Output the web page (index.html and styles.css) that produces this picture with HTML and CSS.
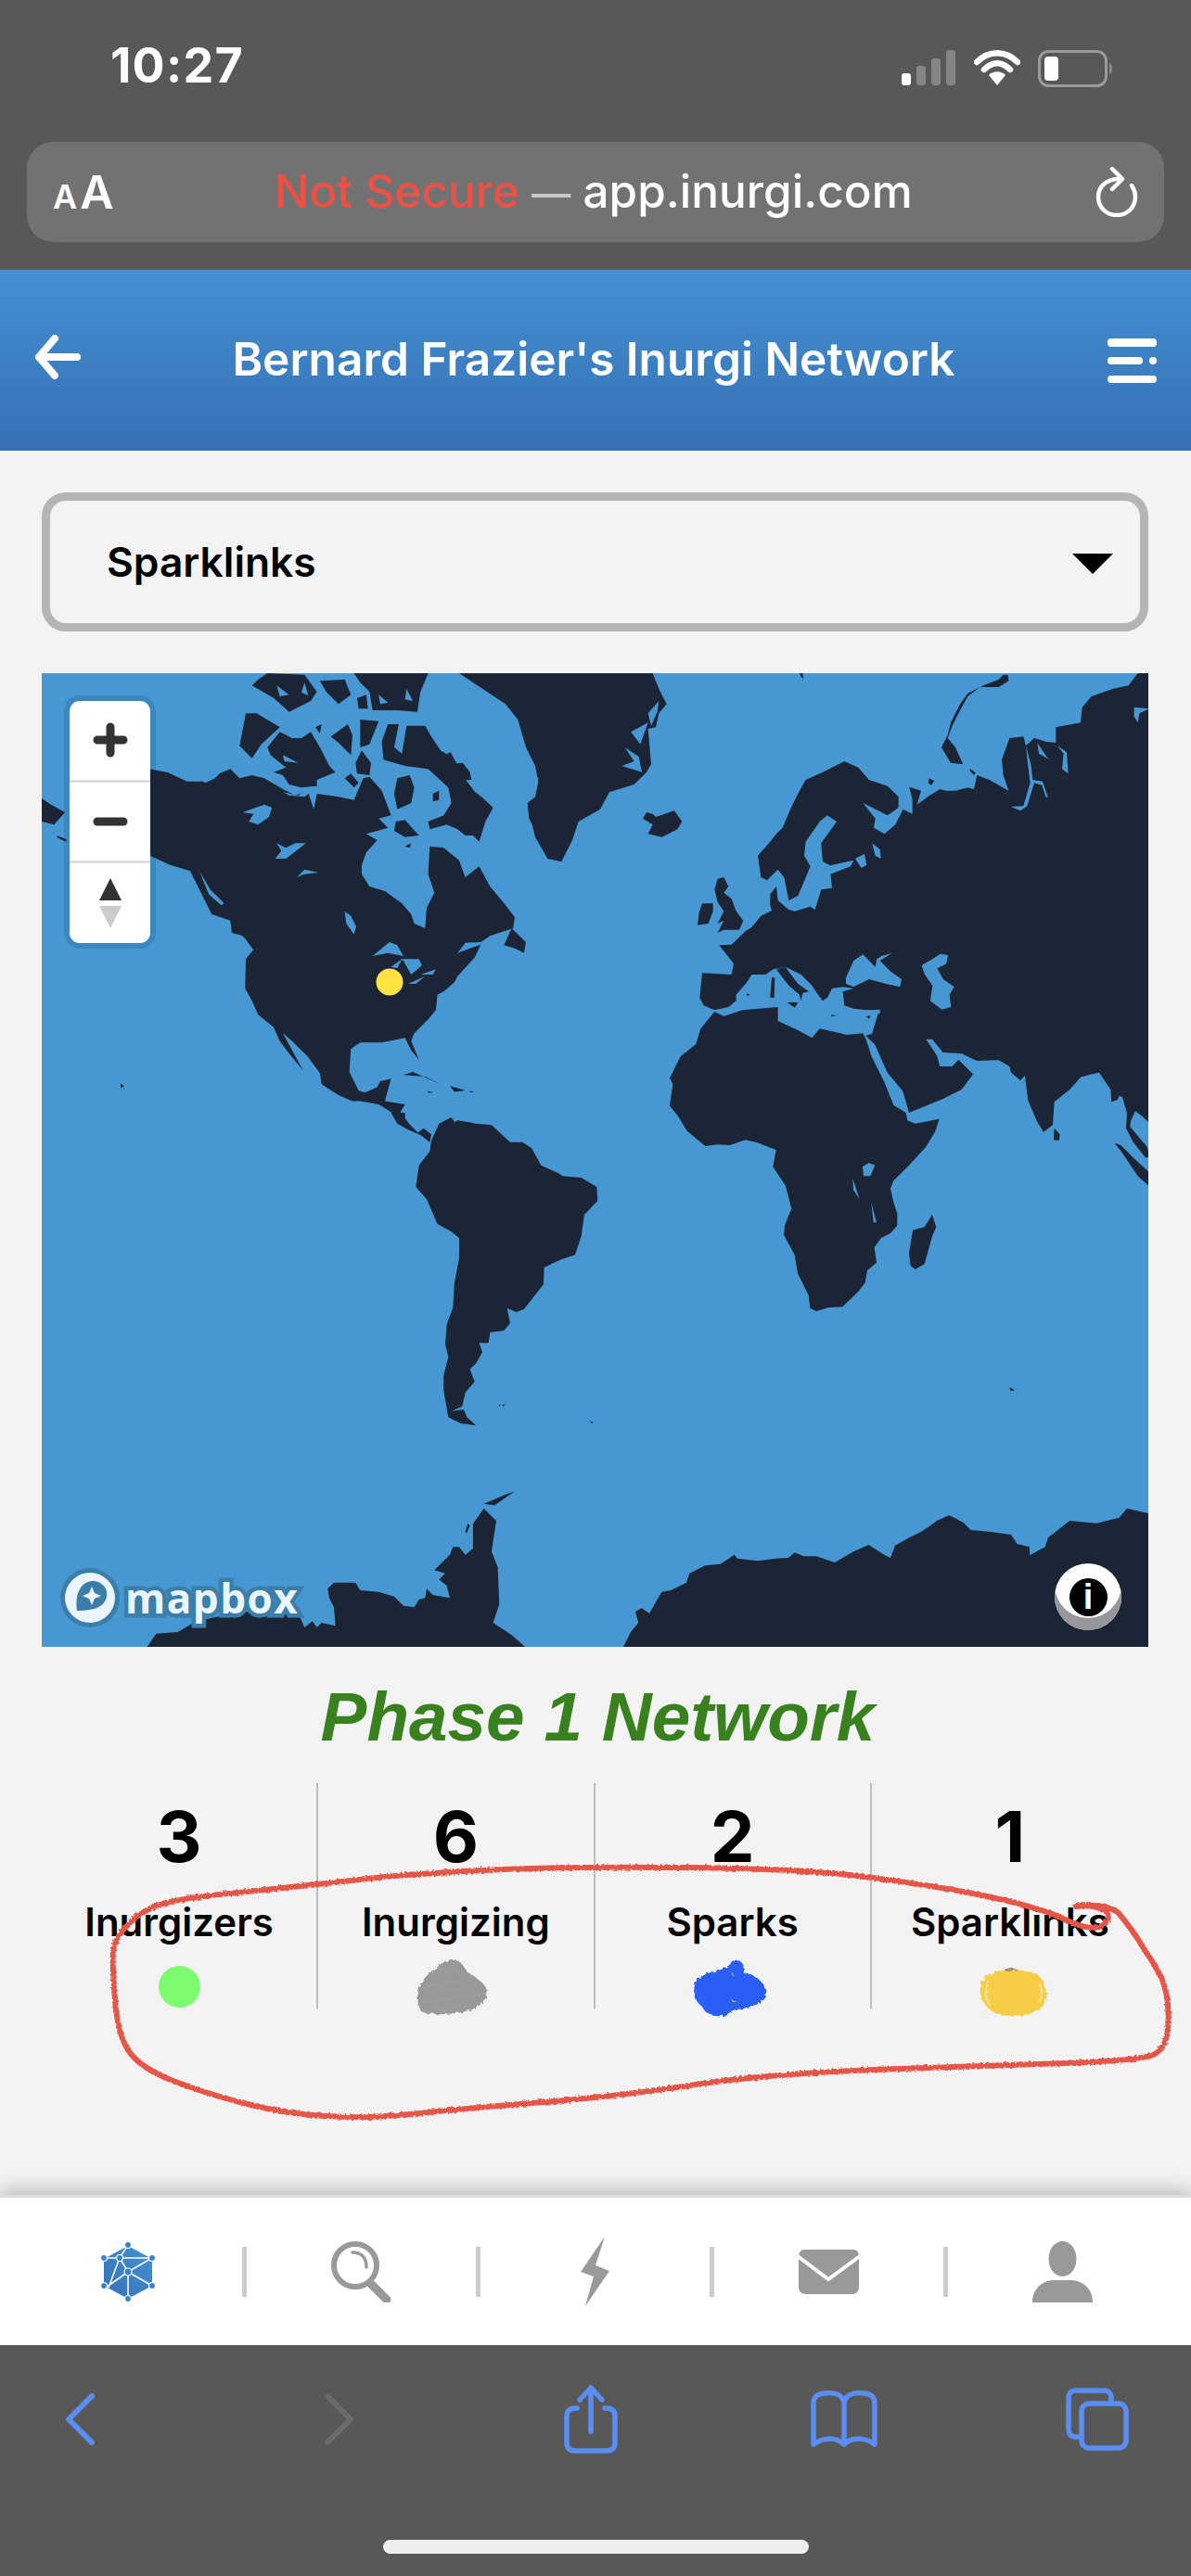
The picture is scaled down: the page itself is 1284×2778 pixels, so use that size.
FILE: index.html
```html
<!DOCTYPE html>
<html lang="en">
<head>
<meta charset="utf-8">
<title>Bernard Frazier's Inurgi Network</title>
<link rel="stylesheet" href="styles.css">
</head>
<body>
<div class="screen">
  <div class="browser-top">
    <div class="statusbar">
      <span class="clock">10:27</span>
      <div class="status-icons">
        <svg class="ic-signal" viewBox="0 0 59 38"><rect class="bar-on" x="0" y="25" width="10" height="13" rx="3"/><rect class="bar-off" x="16" y="17" width="10" height="21" rx="3"/><rect class="bar-off" x="32" y="9" width="10" height="29" rx="3"/><rect class="bar-off" x="48" y="0" width="10" height="38" rx="3"/></svg>
        <svg class="ic-wifi" viewBox="0 0 50 38"><path class="wifi-arc" d="M3 13C16 0 34 0 47 13"/><path class="wifi-arc" d="M11 21C20 12 30 12 39 21"/><path class="wifi-dot" d="M25 38L16 27C21 22 29 22 34 27Z"/></svg>
        <svg class="ic-batt" viewBox="0 0 82 40"><rect class="batt-body" x="1.5" y="1.5" width="72" height="37" rx="10"/><rect class="batt-fill" x="7" y="7" width="15" height="26" rx="4"/><path class="batt-nub" d="M77 14C81 15 81 25 77 26Z"/></svg>
      </div>
    </div>
    <div class="urlbar">
      <span class="aa"><small>A</small>A</span>
      <span class="url"><span class="insecure">Not Secure</span> <span class="dash">—</span> app.inurgi.com</span>
      <svg class="ic-reload" viewBox="0 0 46 54"><path d="M27 13C13 12 3 21 3 32C3 44 12 52 23 52C34 52 43 44 43 32C43 27 41 23 39 20"/><path d="M18 2L29 13L18 24"/></svg>
    </div>
  </div>

  <header class="appbar">
    <svg class="ic-back" viewBox="0 0 50 48"><path d="M22 4L5 24L22 44M5 24H46"/></svg>
    <h1 class="apptitle">Bernard Frazier's Inurgi Network</h1>
    <svg class="ic-menu" viewBox="0 0 53 48"><rect x="0" y="0" width="53" height="9" rx="4"/><rect x="0" y="20" width="38" height="8" rx="4"/><rect x="45" y="20" width="8" height="8" rx="4"/><rect x="0" y="40" width="53" height="8" rx="4"/></svg>
  </header>

  <main class="content">
    <div class="select">
      <span>Sparklinks</span>
      <i class="caret"></i>
    </div>

    <div class="map">
      <svg class="world" viewBox="45 726 1193 1050">
        <g class="land" transform="translate(45 726) scale(.3333)">
          <!-- North America -->
          <polygon points="350,310 410,322 470,350 515,350 560,330 610,310 640,340 680,330 720,340 780,375 820,395 860,380 880,440 890,390 960,400 1010,410 1040,340 1060,335 1100,380 1130,460 1090,470 1120,500 1050,520 1085,540 1050,580 1035,620 1035,650 1060,690 1110,705 1165,745 1195,780 1205,810 1240,825 1245,760 1270,710 1250,650 1255,560 1300,565 1350,605 1370,660 1415,625 1450,690 1500,750 1530,790 1525,825 1450,850 1420,870 1370,872 1345,905 1420,878 1400,920 1345,980 1335,1000 1300,1030 1280,1040 1275,1090 1250,1120 1205,1165 1195,1190 1220,1250 1195,1220 1175,1180 1100,1195 1030,1195 1000,1215 995,1290 1025,1350 1045,1357 1085,1340 1095,1320 1130,1312 1110,1385 1175,1395 1160,1420 1190,1460 1220,1490 1200,1480 1170,1455 1130,1420 1090,1395 1030,1385 1005,1385 960,1365 905,1330 900,1295 860,1240 810,1190 780,1165 845,1285 800,1230 770,1190 750,1145 700,1105 680,1060 658,1020 660,925 680,900 660,860 615,840 610,800 550,780 480,640 415,620 350,590 300,450"/>
          <!-- Aleutians -->
          <polygon points="0,405 30,425 75,450 40,490 0,480"/>
          <polygon points="50,525 80,538 78,545 50,532"/>
          <!-- Arctic islands -->
          <polygon points="1105,280 1100,220 1120,165 1155,165 1140,240 1165,260 1180,170 1240,170 1260,205 1290,250 1310,262 1322,255 1342,292 1362,290 1385,320 1390,345 1372,346 1402,385 1422,400 1460,435 1435,480 1415,545 1395,525 1370,525 1345,505 1310,490 1255,505 1250,480 1300,460 1325,420 1315,370 1250,310 1175,300"/>
          <polygon points="1145,480 1175,475 1220,525 1175,530 1140,510"/>
          <polygon points="1265,390 1285,380 1285,410 1265,415"/>
          <polygon points="1175,560 1195,550 1190,565"/>
          <polygon points="1150,340 1190,330 1205,370 1195,420 1150,440 1140,390"/>
          <polygon points="980,340 1000,325 1025,355 1010,370"/>
          <polygon points="730,240 770,190 810,210 840,210 870,190 900,240 930,300 950,320 890,345 890,365 840,370 800,360 780,330 750,320 790,305 740,265"/>
          <polygon points="660,130 695,130 770,175 710,230 680,275 640,235"/>
          <polygon points="885,175 905,165 900,195"/>
          <polygon points="935,205 990,165 1005,200 1000,265 960,225"/>
          <polygon points="1030,150 1090,155 1060,230 1030,240"/>
          <polygon points="1015,290 1035,250 1065,290 1060,330 1020,325"/>
          <polygon points="700,20 730,0 850,5 890,60 870,90 800,125 750,80 680,40"/>
          <polygon points="900,25 980,20 1000,70 960,100 920,60"/>
          <polygon points="1020,80 1050,70 1055,115 1025,115"/>
          <polygon points="1010,0 1250,0 1225,60 1215,125 1150,120 1070,120 1060,60 1030,30"/>
          <polygon points="1495,880 1520,825 1566,870 1560,905 1530,890"/>
          <polygon points="1400,965 1460,935 1430,950"/>
          <!-- Caribbean -->
          <polygon points="1170,1300 1200,1290 1290,1330 1240,1305"/>
          <polygon points="1320,1335 1370,1350 1335,1355"/>
          <polygon points="1250,1352 1265,1356 1250,1358"/>
          <polygon points="1385,1352 1400,1354 1385,1356"/>
          <polygon points="255,1328 266,1336 256,1342"/>
        </g>
        <g class="land" transform="translate(567 726) scale(.3333)">
          <!-- Greenland -->
          <polygon points="-216,0 410,0 430,50 455,100 430,130 420,175 395,180 405,295 390,320 350,360 270,385 240,440 170,480 150,540 115,610 70,600 30,530 20,490 10,470 5,420 30,400 40,350 30,300 0,240 -26,150 -66,100"/>
          <polygon points="885,0 895,0 898,18 890,12"/>
          <!-- Europe -->
          <polygon points="570,970 665,975 672,940 625,880 665,878 710,835 730,822 760,785 795,768 790,750 790,715 810,690 815,735 850,765 870,770 920,755 935,765 955,700 990,695 985,650 1050,625 1060,605 985,622 960,610 955,550 1005,480 975,460 950,480 905,545 900,590 920,625 895,685 880,720 850,735 835,660 815,635 780,670 760,660 750,590 790,545 810,520 830,500 860,430 885,380 905,345 960,320 1030,285 1075,305 1110,345 1170,365 1205,400 1205,435 1170,460 1090,420 1130,470 1125,500 1160,520 1195,490 1220,440 1250,455 1250,410 1240,368 1278,380 1265,425 1300,400 1330,385 1340,1122 1145,1122 1145,1088 1100,1090 1060,1085 1030,1075 1025,1030 1060,1020 1025,1015 990,1020 975,1050 960,1060 945,1040 925,1010 890,975 840,950 800,958 775,975 730,975 715,1000 680,1040 680,1060 655,1080 610,1090 575,1075 562,1050"/>
          <polygon points="810,958 830,985 850,1010 885,1040 890,1060 895,1035 915,1030 880,1005 850,965 840,950"/>
          <polygon points="795,985 805,985 803,1050 790,1050"/>
          <polygon points="845,1065 880,1065 870,1082"/>
          <polygon points="985,1105 1005,1108 990,1110"/>
          <polygon points="1100,1110 1115,1108 1110,1118"/>
          <polygon points="715,1035 725,1040 715,1045"/>
          <polygon points="570,745 605,745 605,770 590,810 555,815 560,775"/>
          <polygon points="620,665 640,660 655,690 640,710 665,730 680,770 703,800 690,830 640,830 620,840 640,800 620,810 640,770 620,740 610,700"/>
          <polygon points="390,450 410,455 420,465 480,445 505,480 490,505 440,530 395,520 410,490 378,470"/>
        </g>
        <g class="land" transform="translate(1000 726) scale(.3333)">
          <!-- Northern Asia -->
          <polygon points="0,400 40,375 60,380 90,380 130,370 150,375 160,330 200,345 262,380 245,330 240,280 265,210 310,205 318,235 345,210 385,222 415,225 415,175 495,160 500,110 530,75 600,50 650,40 680,0 720,0 720,1130 0,1130"/>
          <!-- Novaya Zemlya -->
          <polygon points="260,5 262,25 230,45 170,45 130,75 100,130 80,170 65,210 90,240 115,295 75,290 45,240 65,200 75,160 105,100 130,65 180,40 230,20 245,5"/>
          <polygon points="137,308 155,322 150,330 137,316"/>
          <polygon points="5,340 22,348 12,362 2,355"/>
        </g>
        <g class="land" transform="translate(760 1100) scale(.3333)">
          <!-- South Asia and Arabia -->
          <polygon points="560,-20 1440,-20 1440,335 1415,312 1392,295 1378,325 1375,345 1430,410 1440,445 1425,445 1385,395 1362,350 1365,300 1350,250 1340,245 1335,258 1315,265 1312,225 1275,170 1240,178 1215,185 1180,225 1130,265 1125,340 1095,362 1075,330 1045,260 1035,180 1020,195 990,170 985,150 950,130 875,132 830,108 818,125 868,175 830,225 770,255 660,300 640,230 590,170 550,80 520,50 540,45"/>
          <!-- Africa -->
          <polygon points="31,-27 61,-12 121,-32 236,-42 236,3 301,33 346,58 371,28 461,48 511,43 520,60 540,120 580,200 610,275 650,300 655,325 680,335 758,320 745,360 715,410 660,470 610,520 600,545 610,590 622,625 622,665 600,690 570,705 548,735 555,785 525,810 518,850 495,880 445,928 400,930 360,942 340,932 335,890 300,820 290,760 255,695 258,665 280,610 260,535 220,475 230,420 165,395 130,388 80,405 40,403 1,408 -59,358 -89,308 -114,278 -104,208 -114,188 -79,118 -29,78 -14,28"/>
          <polygon points="735,630 748,670 735,700 710,790 680,806 665,795 660,755 672,680 710,670"/>
          <polygon points="1130,350 1148,370 1145,390 1128,388"/>
          <polygon points="1325,398 1345,405 1390,450 1440,495 1440,540 1400,505 1350,430"/>
          <polygon points="985,1188 1003,1198 988,1200"/>
        </g>
        <g class="land" transform="translate(300 1200) scale(.3333)">
          <!-- South America -->
          <polygon points="495,90 520,35 560,15 570,30 580,25 640,35 690,40 750,95 790,95 820,115 850,170 905,195 920,205 980,210 1030,240 1033,285 990,330 980,400 960,460 915,475 860,500 858,555 795,635 770,645 740,632 750,680 730,705 685,710 680,745 650,745 660,775 640,810 620,830 635,870 605,905 595,950 560,965 600,960 610,985 640,1012 590,1005 550,985 535,900 535,850 550,790 540,750 545,685 565,630 570,550 585,470 585,405 560,385 515,360 480,280 445,240 455,170 490,125"/>
          <polygon points="365,0 410,0 410,30 450,65 470,50 495,70 490,95 460,72 420,55 385,35"/>
          <polygon points="712,948 720,942 716,950"/>
          <polygon points="726,945 735,942 728,952"/>
          <polygon points="1005,995 1018,1002 1016,1006"/>
        </g>
        <g class="land" transform="translate(45 1590) scale(.3333)">
          <!-- Antarctic peninsula -->
          <polygon points="340,560 370,515 440,510 500,475 620,450 700,440 830,450 850,495 875,475 890,495 905,480 950,490 945,430 930,400 925,370 945,350 1015,350 1030,375 1090,380 1140,395 1170,425 1205,430 1220,405 1240,400 1245,370 1265,390 1320,400 1310,360 1285,340 1305,320 1270,310 1320,260 1330,235 1350,235 1370,260 1395,240 1395,160 1430,110 1470,150 1455,250 1475,300 1480,420 1460,480 1520,520 1566,560"/>
          <polygon points="1430,95 1500,65 1530,55 1465,100"/>
          <polygon points="1370,185 1378,160 1385,165 1375,190"/>
        </g>
        <g class="land" transform="translate(660 1590) scale(.3333)">
          <!-- Antarctica -->
          <polygon points="35,560 60,510 85,480 75,445 95,432 120,450 160,380 190,375 240,350 250,320 300,295 350,290 395,260 405,272 470,280 530,272 570,270 590,253 620,265 660,265 720,285 780,250 830,228 880,260 900,270 915,230 960,205 1000,185 1030,165 1050,150 1090,132 1135,155 1160,180 1220,185 1290,195 1310,225 1350,235 1350,262 1400,235 1410,205 1480,150 1566,158 1640,140 1665,110 1734,126 1734,560"/>
        </g>
        <g class="water" transform="translate(45 726) scale(.3333)">
          <polygon points="650,450 720,425 745,435 735,465 700,490 670,480 685,455"/>
          <polygon points="760,550 790,565 820,550 855,550 790,600 755,600 775,575"/>
          <polygon points="825,660 850,635 895,645 850,650"/>
          <polygon points="980,770 1000,785 1017,820 1010,845 985,810"/>
          <polygon points="1070,915 1125,870 1150,880 1170,915 1120,905"/>
          <polygon points="1130,950 1165,925 1150,955"/>
          <polygon points="1160,925 1220,925 1230,945 1195,975 1170,930"/>
          <polygon points="1185,1005 1240,980 1210,1005"/>
          <polygon points="1225,975 1275,958 1265,975"/>
          <polygon points="510,640 545,700 590,745 580,750 540,715"/>
          <polygon points="615,840 650,850 685,895 675,905 645,860"/>
          <polygon points="510,345 585,315 560,340 530,355"/>
          <polygon points="780,385 830,395 870,365 890,370 850,400 800,395"/>
          <polygon points="760,40 800,70 770,75"/>
          <polygon points="850,30 862,72 840,62"/>
          <polygon points="1090,70 1120,95 1095,100"/>
          <polygon points="1180,50 1200,90 1175,85"/>
          <polygon points="780,265 830,290 785,285"/>
        </g>
        <g class="water" transform="translate(567 726) scale(.3333)">
          <polygon points="1035,985 1060,930 1090,910 1110,930 1130,950 1135,925 1150,915 1185,905 1145,930 1180,965 1215,990 1210,1015 1165,1005 1110,990 1060,1015 1035,1005"/>
          <polygon points="1280,945 1315,925 1340,908 1365,912 1360,940 1330,955 1350,990 1385,1015 1370,1040 1375,1080 1345,1088 1308,1060 1315,1010 1290,975"/>
          <polygon points="1065,600 1095,585 1102,620 1085,630"/>
          <polygon points="1120,550 1145,570 1148,600 1130,590"/>
          <polygon points="320,240 365,270 375,320 310,300 350,285"/>
          <polygon points="340,190 395,160 370,230"/>
          <polygon points="395,130 430,90 425,125 405,170"/>
          <polygon points="0,300 40,340 30,370 0,345"/>
        </g>
        <g class="water" transform="translate(1000 726) scale(.3333)">
          <polygon points="318,235 325,300 332,355 310,430 270,432 300,445 322,430 345,355 370,362 382,400 390,402 372,350 340,345 335,300"/>
          <polygon points="355,225 385,270 395,280 360,260"/>
          <polygon points="420,235 450,255 455,325 435,310 440,260"/>
          <polygon points="668,110 717,115 685,130 680,160 668,140"/>
        </g>
        <g class="water" transform="translate(760 1100) scale(.3333)">
          <polygon points="715,62 735,62 770,105 825,108 880,132 868,175 820,128 800,150 760,150 750,115"/>
          <polygon points="510,475 530,462 550,470 535,505 513,505"/>
          <polygon points="478,512 500,580 480,550"/>
          <polygon points="538,590 555,655 545,655"/>
        </g>
        <circle class="marker" cx="420" cy="1059" r="14.5"/>
      </svg>

      <div class="zoomctl">
        <div class="zbtn">
          <svg class="ic-z" viewBox="0 0 38 38"><path d="M5 19H33M19 5V33"/></svg>
        </div>
        <div class="zbtn">
          <svg class="ic-z" viewBox="0 0 38 38"><path d="M5 19H33"/></svg>
        </div>
        <div class="zbtn zlast">
          <svg class="ic-compass" viewBox="0 0 24 54"><polygon class="north" points="12,0 24,24 0,24"/><polygon class="south" points="0,30 24,30 12,54"/></svg>
        </div>
      </div>

      <div class="mapbox">
        <svg class="ic-mapbox" viewBox="0 0 64 64"><circle class="mb-halo" cx="32" cy="32" r="32"/><circle class="mb-white" cx="32" cy="32" r="27"/><path class="mb-drop" d="M18 46C16 30 20 16 34 14C44 13 52 22 50 31C48 41 38 46 18 46Z"/><path class="mb-star" d="M34 20L37 27L44 30L37 33L34 40L31 33L24 30L31 27Z"/></svg>
        <span class="mb-word">mapbox</span>
      </div>

      <div class="info"><span class="info-i">i</span></div>
    </div>

    <h2 class="phase">Phase 1 Network</h2>

    <div class="stats">
      <div class="stat">
        <span class="num">3</span>
        <span class="lbl">Inurgizers</span>
        <i class="dot"></i>
      </div>
      <div class="stat">
        <span class="num">6</span>
        <span class="lbl">Inurgizing</span>
        <svg class="blob" viewBox="0 0 90 62"><g class="rough"><path class="blob-grey" d="M40 0C50 -1 54 8 58 14C72 22 80 30 79 36C78 48 66 54 52 57C36 60 14 60 8 56C1 44 4 26 18 14C26 8 32 2 40 0Z"/><path class="blob-grey-s" d="M30 10L50 5M14 28L66 20M6 46L76 38M12 56L58 54"/></g></svg>
      </div>
      <div class="stat">
        <span class="num">2</span>
        <span class="lbl">Sparks</span>
        <svg class="blob" viewBox="0 0 90 62"><g class="rough"><path class="blob-blue" d="M44 3C52 0 56 8 55 14C68 16 80 24 81 36C82 46 66 52 48 54C36 60 18 62 14 52C2 46 0 30 8 20C18 12 36 14 44 3Z"/><path class="blob-blue-s" d="M14 50C18 62 38 62 44 52M44 5C50 -1 58 6 54 16"/><path class="blob-fleck" d="M44 14L46 18M44 44L48 46"/></g></svg>
      </div>
      <div class="stat">
        <span class="num">1</span>
        <span class="lbl">Sparklinks</span>
        <svg class="blob" viewBox="0 0 90 62"><path class="blob-cap" d="M36 16C38 8 52 6 56 16Z"/><g class="rough"><path class="blob-yellow" d="M22 16C36 10 60 10 74 16C86 26 88 44 78 52C66 62 40 64 26 56C10 46 8 26 22 16Z"/><path class="blob-gloss" d="M22 24C17 32 18 44 24 50M76 26C80 32 80 40 76 46"/></g></svg>
      </div>
    </div>
  </main>

  <nav class="tabnav">
    <div class="navitem">
      <svg class="ic-net" viewBox="0 0 60 66">
        <defs><linearGradient id="netg" x1="0" y1="1" x2="1" y2="0"><stop offset="0" stop-color="#3571b4"/><stop offset="1" stop-color="#4393d5"/></linearGradient></defs>
        <polygon class="net-fill" points="30,4 56,18 56,48 30,62 4,48 4,18"/>
        <path class="net-lines" d="M30 4L21 18M21 18H56M21 18L30 33M21 18L9 50M30 33L56 18M30 33L56 48M30 33V62M30 33L6 50M4 18L21 18M4 18L30 4M56 18L30 4"/>
        <circle class="net-node" cx="30" cy="4" r="3.5"/><circle class="net-node" cx="4" cy="18" r="3.5"/><circle class="net-node" cx="21" cy="18" r="3.5"/><circle class="net-node" cx="56" cy="18" r="3.5"/><circle class="net-node" cx="30" cy="33" r="4"/><circle class="net-node" cx="4" cy="48" r="3.5"/><circle class="net-node" cx="56" cy="48" r="3.5"/><circle class="net-node" cx="30" cy="62" r="3.5"/>
      </svg>
    </div>
    <div class="navitem">
      <svg class="ic-search" viewBox="0 0 65 66"><circle class="s-ring" cx="26" cy="26" r="23"/><path class="s-glint" d="M23 12C33 12 38 18 38 28"/><path class="s-handle" d="M43 46L60 63"/></svg>
    </div>
    <div class="navitem">
      <svg class="ic-bolt" viewBox="0 0 32 75"><polygon points="26,0 0,38 14,43 5,75 31,37 16,31"/></svg>
    </div>
    <div class="navitem">
      <svg class="ic-mail" viewBox="0 0 65 48"><path class="mail-body" d="M6 0H59C63 0 65 3 65 8V40C65 45 62 48 58 48H8C3 48 0 45 0 40V8C0 3 2 0 6 0Z"/><path class="mail-v" d="M-1 7L32 32L66 7"/></svg>
    </div>
    <div class="navitem">
      <svg class="ic-user" viewBox="0 0 65 66"><ellipse cx="32.5" cy="19" rx="15" ry="19"/><path d="M0 66C0 50 12 42 24 42H41C53 42 65 50 65 66Z"/></svg>
    </div>
  </nav>

  <footer class="toolbar">
    <div class="tool-icons">
      <svg class="ic-chev" viewBox="0 0 32 56"><path class="tb" d="M29 3L4 28L29 53"/></svg>
      <svg class="ic-chev ic-fwd" viewBox="0 0 32 56"><path class="tb tb-off" d="M3 3L28 28L3 53"/></svg>
      <svg class="ic-share" viewBox="0 0 58 74"><path class="tb" d="M14 25H12C6 25 3 28 3 34V62C3 68 6 71 12 71H46C52 71 55 68 55 62V34C55 28 52 25 46 25H44"/><path class="tb" d="M29 50V3M17 16L29 3L41 16"/></svg>
      <svg class="ic-book" viewBox="0 0 72 62"><path class="tb" d="M36 12C33 2 22 2 14 3C6 4 3 7 3 14V58C14 50 28 50 36 58C44 50 58 50 69 58V14C69 7 66 4 58 3C50 2 39 2 36 12V56"/></svg>
      <svg class="ic-tabs" viewBox="0 0 68 68"><path class="tb" d="M15 53H11C6 53 3 50 3 45V11C3 6 6 3 11 3H41C46 3 49 6 49 11V17"/><rect class="tb" x="17" y="17" width="48" height="48" rx="8"/></svg>
    </div>
    <i class="homebar"></i>
  </footer>

  <svg class="redline" viewBox="0 0 1284 2778">
    <defs>
      <filter id="rough" filterUnits="userSpaceOnUse" x="0" y="1900" width="1284" height="500">
        <feTurbulence type="fractalNoise" baseFrequency=".35" numOctaves="2" seed="4"/>
        <feDisplacementMap in="SourceGraphic" scale="4"/>
      </filter>
      <filter id="roughblob" x="-15%" y="-15%" width="130%" height="130%">
        <feTurbulence type="fractalNoise" baseFrequency=".25" numOctaves="2" seed="7"/>
        <feDisplacementMap in="SourceGraphic" scale="5"/>
      </filter>
    </defs>
    <path d="M134 2080Q145 2066 166 2056Q188 2047 266 2040Q344 2032 387 2027Q430 2022 469 2020Q508 2017 573 2015Q639 2013 745 2014Q852 2015 917 2022Q983 2030 1044 2041Q1106 2053 1140 2066Q1170 2082 1185 2078Q1200 2072 1192 2060Q1170 2052 1160 2056Q1190 2052 1205 2062Q1222 2082 1236 2106Q1253 2130 1257 2148Q1261 2167 1259 2188Q1257 2210 1243 2216Q1229 2222 1147 2225Q1065 2228 942 2232Q819 2237 737 2250Q655 2262 573 2268Q491 2275 442 2280Q393 2285 352 2282Q311 2280 270 2270Q229 2260 192 2246Q156 2233 141 2215Q127 2197 124 2157Q121 2117 122 2105Q123 2093 134 2080"/>
  </svg>
</div>
</body>
</html>
```

FILE: styles.css
```css
* { box-sizing: border-box; }
html, body { margin: 0; padding: 0; }
body { width: 1284px; height: 2778px; overflow: hidden; background: #585858; font-family: Inter, "Liberation Sans", sans-serif; }
svg { display: block; }
.screen { position: relative; width: 1284px; height: 2778px; display: flex; flex-direction: column; }

/* Safari top chrome */
.browser-top { height: 291px; background: #585858; padding: 0 29px; display: flex; flex-direction: column; flex: none; }
.statusbar { height: 153px; display: flex; justify-content: space-between; align-items: flex-start; padding: 42px 0 0 90px; }
.clock { color: #fff; font-size: 52px; font-weight: 700; line-height: 58px; letter-spacing: 1.2px; }
.status-icons { display: flex; align-items: flex-start; gap: 19px; padding: 12px 54px 0 0; }
.ic-signal { width: 59px; height: 38px; }
.bar-on { fill: #fff; }
.bar-off { fill: #858585; }
.ic-wifi { width: 50px; height: 38px; }
.wifi-arc { fill: none; stroke: #fff; stroke-width: 6.5; stroke-linecap: round; }
.wifi-dot { fill: #fff; }
.ic-batt { width: 82px; height: 40px; }
.batt-body { fill: none; stroke: #9a9a9a; stroke-width: 3; }
.batt-fill { fill: #fff; }
.batt-nub { fill: #8a8a8a; }
.urlbar { height: 108px; background: #727272; border-radius: 28px; display: flex; align-items: center; padding: 0 28px; }
.aa { color: #fff; font-size: 50px; font-weight: 600; width: 239px; flex: none; line-height: 1; }
.aa small { font-size: 36px; margin-right: 3px; }
.url { color: #fff; font-size: 49.5px; font-weight: 500; line-height: 1; white-space: nowrap; flex: 1; }
.insecure { color: #ec5145; }
.dash { color: #c9c9c9; font-size: 42px; }
.ic-reload { width: 46px; height: 54px; flex: none; }
.ic-reload path { fill: none; stroke: #fff; stroke-width: 4.5; stroke-linecap: round; stroke-linejoin: round; }

/* App header */
.appbar { height: 195px; flex: none; background: linear-gradient(180deg, #4391d4 0%, #3570b3 100%); display: flex; align-items: center; justify-content: space-between; padding: 0 37px; }
.ic-back { width: 50px; height: 48px; margin-top: -7px; }
.ic-back path { fill: none; stroke: #fff; stroke-width: 8; stroke-linecap: round; stroke-linejoin: round; }
.apptitle { margin: -3px 0 0 -1px; color: #fff; font-size: 49.6px; font-weight: 600; line-height: 60px; white-space: nowrap; }
.ic-menu { width: 53px; height: 48px; fill: #fff; }

/* Page body */
.content { flex: 1; background: #f3f3f3; padding: 45px 46px 0 45px; display: flex; flex-direction: column; }
.select { height: 150px; flex: none; border: 9px solid #b5b5b5; border-radius: 26px; display: flex; align-items: center; justify-content: space-between; padding: 0 29px 0 61px; font-size: 44.3px; font-weight: 600; color: #000; }
.caret { width: 0; height: 0; border-left: 22px solid transparent; border-right: 22px solid transparent; border-top: 22px solid #000; margin-top: 4px; }

.map { position: relative; height: 1050px; flex: none; margin-top: 45px; background: #4797d2; overflow: hidden; }
.world { width: 1193px; height: 1050px; }
.land { fill: #1c2535; }
.water { fill: #4797d2; }
.marker { fill: #ffe342; }

.zoomctl { position: absolute; left: 24px; top: 24px; width: 99px; border: 6px solid rgba(0, 40, 80, .14); border-radius: 17px; background-clip: padding-box; overflow: hidden; }
.zbtn { height: 87.5px; background: #fff; border-bottom: 3px solid #ddd; display: flex; align-items: center; justify-content: center; }
.zlast { border-bottom: 0; height: 86px; }
.ic-z { width: 38px; height: 38px; }
.ic-z path { stroke: #333; stroke-width: 9; stroke-linecap: round; fill: none; }
.ic-compass { width: 24px; height: 54px; }
.north { fill: #333; }
.south { fill: #ccc; }

.mapbox { position: absolute; left: 20px; top: 965px; display: flex; align-items: center; gap: 6px; }
.ic-mapbox { width: 64px; height: 64px; }
.mb-halo { fill: #3b7ea9; }
.mb-white { fill: #eaf5fd; }
.mb-drop { fill: #3b7ea9; }
.mb-star { fill: #eaf5fd; }
.mb-word { font-family: "Open Sans", sans-serif; font-size: 44px; font-weight: 700; line-height: 56px; color: #eaf5fd; -webkit-text-stroke: 9px #3b7ea9; paint-order: stroke fill; letter-spacing: 1.5px; }

.info { position: absolute; left: 1092px; top: 960px; width: 72px; height: 72px; border-radius: 50%; background: #fff; box-shadow: inset 0 -13px 0 #95979d; display: flex; align-items: flex-start; justify-content: center; padding-top: 16px; }
.info-i { width: 41px; height: 41px; border-radius: 50%; background: #000; color: #fff; font-family: "Liberation Sans", sans-serif; font-weight: 700; font-size: 38px; line-height: 41px; text-align: center; }

.phase { margin: 29px 0 0; height: 100px; text-align: center; color: #39801f; font-family: "Liberation Sans", sans-serif; font-style: italic; font-weight: 700; font-size: 74.7px; line-height: 92px; padding-left: 6px; }
.stats { display: flex; margin-top: 18px; height: 243px; }
.stat { width: 299px; border-right: 2px solid #bdbdbd; display: flex; flex-direction: column; align-items: center; color: #000; }
.stat:last-child { border-right: 0; }
.num { font-size: 76px; font-weight: 700; line-height: 80px; margin-top: 17px; }
.lbl { font-size: 42px; font-weight: 600; line-height: 50px; margin-top: 28px; }
.dot { display: block; width: 45px; height: 45px; border-radius: 50%; background: #7cfc6e; margin-top: 22px; }
.blob { width: 90px; height: 62px; margin-top: 15px; overflow: visible; }
.rough { filter: url(#roughblob); }
.blob-grey { fill: #999; }
.blob-grey-s { stroke: #9d9d9d; stroke-width: 2; fill: none; }
.blob-blue { fill: #2a5ff5; }
.blob-blue-s { stroke: #2a5ff5; stroke-width: 4; fill: none; }
.blob-fleck { stroke: #b9b47a; stroke-width: 1.5; fill: none; }
.blob-cap { fill: #777; }
.blob-yellow { fill: #f7cd45; }
.blob-gloss { stroke: #fbe59a; stroke-width: 2; fill: none; }

/* Bottom nav */
.tabnav { height: 162px; flex: none; background: #fff; border-top: 3px solid #ddd; box-shadow: 0 -6px 18px rgba(0, 0, 0, .22); display: grid; grid-template-columns: repeat(5, 252px); align-items: center; padding-left: 14px; position: relative; }
.navitem { height: 54px; border-right: 5px solid #ccc; display: flex; align-items: center; justify-content: center; }
.navitem:last-child { border-right: 0; padding-right: 5px; }
.navitem svg { flex: none; }
.ic-net { width: 60px; height: 66px; }
.net-fill { fill: url(#netg); }
.net-lines { stroke: #fff; stroke-width: 1.6; fill: none; }
.net-node { fill: #3a83c8; stroke: #fff; stroke-width: 1.2; }
.ic-search { width: 65px; height: 66px; }
.s-ring { fill: none; stroke: #999; stroke-width: 6; }
.s-glint { fill: none; stroke: #999; stroke-width: 3.5; stroke-linecap: round; }
.s-handle { fill: none; stroke: #999; stroke-width: 9; stroke-linecap: round; }
.ic-bolt { width: 32px; height: 75px; fill: #999; }
.ic-mail { width: 65px; height: 48px; }
.mail-body { fill: #999; }
.mail-v { fill: none; stroke: #fff; stroke-width: 4; }
.ic-user { width: 65px; height: 66px; fill: #999; }

/* Safari bottom toolbar */
.toolbar { height: 249px; flex: none; background: #585858; display: flex; flex-direction: column; align-items: center; position: relative; z-index: 1; }
.tool-icons { width: 100%; height: 210px; display: flex; align-items: center; padding: 0 0 50px 70px; }
.tb { fill: none; stroke: #5a8ef5; stroke-width: 5.5; stroke-linecap: round; stroke-linejoin: round; }
.tb-off { stroke: #6b6b6b; }
.ic-chev { width: 32px; height: 56px; }
.ic-chev .tb { stroke-width: 6; }
.ic-fwd { margin-left: 248px; }
.ic-share { width: 58px; height: 74px; margin-left: 226px; }
.ic-book { width: 72px; height: 62px; margin-left: 208px; }
.ic-tabs { width: 68px; height: 68px; margin-left: 203px; }
.homebar { display: block; width: 459px; height: 15px; border-radius: 8px; background: #eee; }

.redline { position: absolute; left: 0; top: 0; width: 1284px; height: 2778px; pointer-events: none; z-index: 2; }
.redline path { fill: none; stroke: #e5574a; stroke-width: 6; stroke-linejoin: round; stroke-linecap: round; filter: url(#rough); }
```
